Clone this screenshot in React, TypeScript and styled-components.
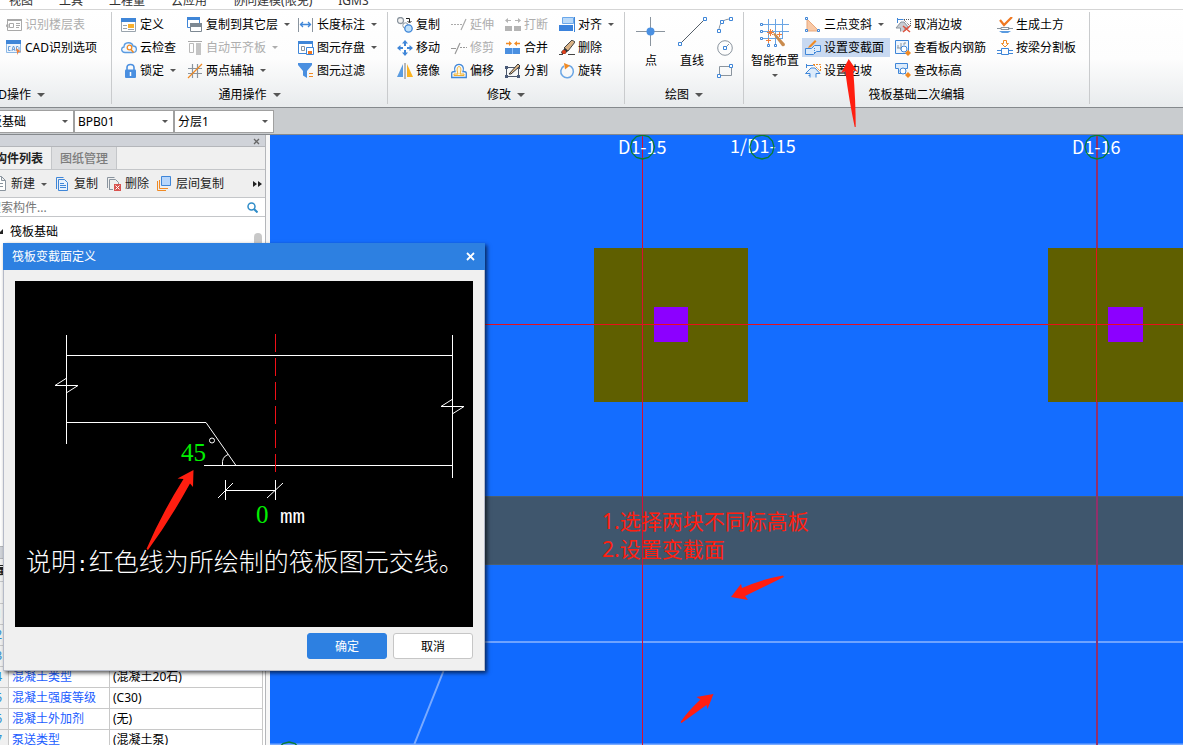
import React from "react";
import styled, { createGlobalStyle, css } from "styled-components";

const BLUE = "#3f86d8";
const GREY = "#8a949e";
const ORANGE = "#f08a24";
const RED = "#ff1e10";

const GlobalStyle = createGlobalStyle`
  *, *::before, *::after { box-sizing: border-box; }
  body {
    margin: 0;
    overflow: hidden;
    background: #f7f7f7;
    font-family: "Noto Sans", "Noto Sans CJK SC", sans-serif;
    font-size: 12px;
    line-height: 16px;
    color: #000;
  }
  button, select, input { font: inherit; color: inherit; margin: 0; }
  button { border: 0; background: none; padding: 0; white-space: nowrap; }
`;

/* The application window reaches past the top and left edges of the view. */
const Window = styled.div`
  display: flex;
  flex-direction: column;
  margin: -12px 0 0 -26px;
  height: calc(100vh + 12px);
`;

const MenuBar = styled.nav`
  display: flex;
  gap: 26px;
  height: 22px;
  padding: 5px 0 0 35px;
  background: #fff;
  border-bottom: 1px solid #d5d5d5;
`;

const MenuLink = styled.a`
  color: #333;
  text-decoration: none;
  white-space: nowrap;
`;

const Ribbon = styled.div`
  display: flex;
  flex: none;
  height: 98px;
  background: linear-gradient(#fff 0%, #fdfdfd 50%, #e8ebed 100%);
  border-bottom: 1px solid #85898d;
`;

const Group = styled.section`
  display: flex;
  flex-direction: column;
  flex: none;
  margin: 2px 0 3px;
  padding-top: 1px;
  border-right: 1px solid #c9cbcd;
`;

const GroupBody = styled.div<{ $inset?: number }>`
  display: flex;
  height: 69px;
  padding-left: ${(p) => p.$inset ?? 6}px;
`;

const GroupLabel = styled.button<{ $start?: boolean }>`
  display: flex;
  flex: 1;
  align-items: center;
  justify-content: ${(p) => (p.$start ? "flex-start" : "center")};
  gap: 6px;
  padding: 4px 0 0 ${(p) => (p.$start ? 9 : 0)}px;
`;

const ToolGrid = styled.div<{ $cols: string }>`
  display: grid;
  grid-auto-flow: column;
  grid-template-rows: repeat(3, 23px);
  grid-template-columns: ${(p) => p.$cols};
  align-items: center;
  justify-items: start;
`;

const ToolButton = styled.button<{ $active?: boolean }>`
  display: flex;
  align-items: center;
  gap: 3px;
  height: 19px;
  padding: 0 6px 0 3px;
  ${(p) => p.$active && css`background: #c8d9f1;`}
  &:disabled { color: #adadad; }
`;

const BigButton = styled.button<{ $width: number }>`
  display: flex;
  flex-direction: column;
  align-items: center;
  width: ${(p) => p.$width}px;
  padding-top: 4px;
  gap: 6px;
`;

const IconColumn = styled.div`
  display: grid;
  grid-template-rows: repeat(3, 23px);
  place-items: center;
  width: 24px;
  margin-right: 6px;
`;

const SmartButton = styled(BigButton)`
  margin-right: 2px;
  padding-top: 5px;
  gap: 5px;
`;

const Caret = styled.span<{ $large?: boolean }>`
  flex: none;
  width: 0;
  height: 0;
  margin-left: ${(p) => (p.$large ? 0 : 3)}px;
  border: solid transparent;
  border-width: ${(p) => (p.$large ? "4px 4px 0" : "3px 3px 0")};
  border-top-color: #555;
  button:disabled & { border-top-color: #adadad; }
`;

const CenteredCaret = styled(Caret)`
  margin-left: 0;
`;

const ComboBar = styled.div`
  display: flex;
  flex: none;
  height: 27px;
  padding-top: 2px;
  background: #c9cccf;
  border-bottom: 1px solid #85898d;
`;

const ComboBox = styled.label`
  position: relative;
  width: 100px;
  height: 23px;
`;

const ComboSelect = styled.select`
  appearance: none;
  display: block;
  width: 100%;
  height: 100%;
  padding: 0 0 0 3px;
  border: 1px solid #a0a0a0;
  border-radius: 0;
  background: #fff;
`;

const ComboCaret = styled(Caret)`
  position: absolute;
  right: 6px;
  top: 10px;
  pointer-events: none;
`;

const Main = styled.div`
  display: flex;
  flex: 1;
  min-height: 0;
`;

const SidePanel = styled.aside`
  display: flex;
  flex-direction: column;
  flex: none;
  width: 292px;
  margin-right: 4px;
  background: #fff;
  border-right: 1px solid #b4b6ba;
`;

const PanelTitle = styled.div`
  display: flex;
  flex: none;
  align-items: center;
  justify-content: flex-end;
  height: 12px;
  padding: 1px 5px 0 0;
  background: #d0d3d9;
  border-bottom: 1px solid #b4b6ba;
`;

const TabRow = styled.div`
  display: flex;
  flex: none;
  height: 23px;
  background: #f0f0f0;
  border-bottom: 1px solid #c4c6c9;
`;

const Tab = styled.button<{ $selected?: boolean }>`
  padding: 2px 8px 0;
  color: #7c7c7c;
  font-weight: 500;
  background: #dedfe1;
  border: 1px solid #c4c6c9;
  border-width: 0 1px 0 0;
  ${(p) =>
    p.$selected &&
    css`
      padding-left: 21px;
      color: #222;
      font-weight: 700;
      background: #f0f0f0;
    `}
`;

const PanelTools = styled.div`
  display: flex;
  flex: none;
  align-items: center;
  height: 28px;
  padding: 1px 3px 0 18px;
  background: #efefef;
  border-bottom: 1px solid #c4c6c9;
  gap: 8px;
`;

const PanelTool = styled.button`
  display: flex;
  align-items: center;
  gap: 3px;
  color: #222;
`;

const MoreTools = styled(PanelTool)`
  margin-left: auto;
`;

const SearchRow = styled.label`
  display: flex;
  flex: none;
  align-items: center;
  height: 19px;
  padding: 1px 7px 0 15px;
  border-bottom: 1px solid #c4c6c9;
`;

const SearchInput = styled.input`
  flex: 1;
  min-width: 0;
  height: 16px;
  padding: 0;
  border: 0;
  outline: 0;
  &::placeholder { color: #777; opacity: 1; }
`;

const TreeArea = styled.div`
  display: flex;
  flex: 1;
  justify-content: space-between;
  padding: 6px 3px 0 24px;
`;

const TreeItem = styled.div`
  display: flex;
  align-items: center;
  gap: 6px;
  height: 17px;
`;

const ScrollThumb = styled.div`
  width: 8px;
  height: 120px;
  margin-top: 10px;
  border-radius: 4px;
  background: #c8c8c8;
`;

const PropertyPanel = styled.section`
  flex: none;
  height: 199px;
  overflow: hidden;
  border-top: 1px solid #b4b6ba;
`;

const PropertyTable = styled.table`
  width: 289px;
  table-layout: fixed;
  border-collapse: collapse;
  td, th {
    height: 21px;
    padding: 0 3px;
    border: 1px solid #c8c8c8;
    border-top: 0;
    text-align: left;
    font-weight: 400;
  }
`;

const IndexCell = styled.th`
  width: 34px;
  background: #f0f0f0;
  color: #2a8fd0;
  && { text-align: right; padding-right: 6px; }
`;

const NameCell = styled.td`
  width: 101px;
  color: #1a5cff;
`;

const Viewport = styled.main`
  flex: 1;
  min-width: 0;
  background: #146dff;
`;

const ModelDrawing = styled.svg`
  display: block;
  width: 100%;
  height: 100%;
`;

const Dialog = styled.div`
  position: absolute;
  left: 3px;
  top: 243px;
  width: 482px;
  background: #f0f0f0;
  border: 1px solid #b5bac8;
  border-top: 0;
  box-shadow: 2px 2px 4px rgba(0, 0, 0, 0.65);
`;

const DialogTitle = styled.header`
  display: flex;
  align-items: center;
  justify-content: space-between;
  height: 27px;
  margin: 0 -1px;
  padding: 0 10px 0 9px;
  background: #2d80e1;
  color: #fff;
`;

const DialogBody = styled.div`
  padding: 11px;
`;

const SectionDrawing = styled.svg`
  display: block;
  width: 100%;
  background: #000;
  font-family: "Liberation Serif", "Noto Sans CJK SC", serif;
  font-size: 25px;
`;

const DialogActions = styled.footer`
  display: flex;
  justify-content: flex-end;
  gap: 6px;
  padding-top: 6px;
`;

const ActionButton = styled.button<{ $primary?: boolean }>`
  width: 80px;
  height: 26px;
  padding-top: 1px;
  border-radius: 3px;
  border: 1px solid ${(p) => (p.$primary ? "#2d80e1" : "#c6c6c6")};
  background: ${(p) => (p.$primary ? "#2d80e1" : "#fff")};
  color: ${(p) => (p.$primary ? "#fff" : "#000")};
`;

const Pointer = styled.svg`
  position: absolute;
  left: 840px;
  top: 58px;
  pointer-events: none;
`;

const Glyph = styled.svg`
  flex: none;
  display: block;
  fill: none;
`;

const icons: Record<string, React.ReactNode> = {
  floors: (
    <g stroke="#a9a9a9">
      <path d="M1.500 2.500h14v11h-14z" />
      <path d="M1 3h15" strokeWidth="2" />
      <path d="M3.500 6.500h4v4h-4zM10 6.500h4M10 8.500h4M10 10.500h3" />
      <path d="M0 8.500l2-1.500v4z" fill="#a9a9a9" />
    </g>
  ),
  cad: (
    <g>
      <path d="M.500 2.500h14v10h-14z" stroke="#8cb8e6" fill="#eef5fd" />
      <path d="M0 0h15v4H0z" fill={BLUE} />
      <path d="M4.500 6.500h-2v4h2M6 11l1-4.500h1L9 11M6.500 9.500h2M10.500 6.500v4h1.500l1-1v-2l-1-1z" stroke="#6a9fd8" />
      <path d="M10 8l5 3.500-2.500.5-1 3z" fill="#f0803c" />
    </g>
  ),
  define: (
    <g>
      <path d="M.500 1.500h14v13h-14z" stroke="#9aa4ad" fill="#fff" />
      <path d="M0 1h15v4H0z" fill={BLUE} />
      <path d="M2 8.500h4M2 11.500h4M7 12.500h6" stroke="#9aa4ad" />
      <path d="M7 7h6v4H7z" fill="#f9b02c" />
    </g>
  ),
  cloud: (
    <g>
      <path d="M4 12.500C0 12.500-.500 7.500 3 7 3 1.500 11 1.500 12 6c4.500 0 4.500 6.500 0 6.500z" stroke="#5a9be0" fill="#f2f8ff" strokeWidth="1.300" />
      <circle cx="8.500" cy="7.500" r="2.300" stroke={ORANGE} strokeWidth="1.300" fill="#fff" />
      <path d="M10 9.500l2.500 3" stroke={ORANGE} strokeWidth="1.500" />
    </g>
  ),
  lock: (
    <g>
      <path d="M6 7V4.500c0-4 7-4 7 0V7" stroke="#4a8fe0" strokeWidth="1.600" />
      <rect x="4" y="6.500" width="11" height="8.500" rx="1" fill="#4a8fe0" />
      <path d="M9.500 9v4" stroke="#fff" strokeWidth="1.500" />
    </g>
  ),
  copyFloor: (
    <g>
      <path d="M.500 1.500h12v9H.500z" stroke={BLUE} fill="#fff" />
      <path d="M0 0h13v3H0z" fill={BLUE} />
      <path d="M3.500 7.500h11v7h-11z" stroke="#7d8892" fill="#fff" />
      <path d="M3 6h12v4H3z" fill="#7d8892" />
    </g>
  ),
  alignSlab: (
    <g>
      <path d="M1 1.500h14" stroke="#a9a9a9" />
      <path d="M2.500 3.500h4v9h-4z" stroke="#b9b9b9" />
      <path d="M9 3h5v12H9z" fill="#c4c4c4" />
    </g>
  ),
  twoPoint: (
    <g>
      <path d="M5.500 1v14M10.500 1v14M1 5.500h14M1 10.500h14" stroke={GREY} strokeWidth="1.200" />
      <path d="M1 15L15 1" stroke={ORANGE} strokeWidth="1.200" />
    </g>
  ),
  length: (
    <g>
      <path d="M.500 1v14M14.500 1v14" stroke={GREY} />
      <path d="M2 7.500h11M5 5L2.500 7.500 5 10M10 5l2.500 2.500L10 10" stroke={BLUE} strokeWidth="1.300" />
    </g>
  ),
  store: (
    <g>
      <path d="M.500 1.500h14v12H.500z" stroke={BLUE} fill="#fff" />
      <path d="M0 1h15v3H0z" fill={BLUE} />
      <path d="M3.500 6.500h3v4h-3z" stroke={GREY} />
      <path d="M8.500 7.500h7v7h-7z" stroke={BLUE} fill="#fff" />
      <path d="M10 11h4v3h-4z" fill="#f07820" />
    </g>
  ),
  filter: (
    <g>
      <path d="M0 0h14v2L9 8v7l-4-2.500V8L0 2z" fill="#4a8fe0" />
      <path d="M11 10.500h4M11 13.500h4" stroke={ORANGE} />
    </g>
  ),
  copy: (
    <g>
      <circle cx="3.500" cy="3.500" r="3" stroke={GREY} strokeWidth="1.300" fill="#f4f4f4" />
      <path d="M9 1.500h3.500V5M10.500 4l2 2 2-2" stroke="#222" />
      <circle cx="8.500" cy="8.500" r="2.700" stroke={GREY} fill="#fff" />
      <circle cx="11.500" cy="11.500" r="3.700" stroke={BLUE} strokeWidth="1.300" fill="#bfe0fa" />
    </g>
  ),
  move: (
    <g fill={BLUE}>
      <path d="M8 0l3 3.500H5zM8 16l3-3.500H5zM0 8l3.500-3v6zM16 8l-3.500-3v6z" />
      <path d="M8 3v3M8 10v3M3 8h3M10 8h3" stroke={BLUE} strokeWidth="2" />
    </g>
  ),
  mirror: (
    <g>
      <path d="M6 1v13H0z" fill="#5a9be0" />
      <path d="M10 1v13h6z" fill="#fbb320" />
      <path d="M8 0v16" stroke="#777" />
    </g>
  ),
  extend: <path d="M0 7.500h2M3 7.500h2M6 7.500h2M9 7.500h2M10 13l5-11" stroke="#ababab" strokeWidth="1.200" />,
  trim: <path d="M0 8.500h5M9 7.500h2M12 7.500h2M15 7.500h1M4 14l5-11" stroke="#999" strokeWidth="1.200" />,
  breakIt: (
    <g fill="#b4b4b4">
      <path d="M0 9h7v5H0zM9 9h7v5H9z" />
      <path d="M3 1v5L0 3.500zM13 1v5l3-2.500z" />
      <path d="M2 3.500h4M10 3.500h4" stroke="#b4b4b4" />
    </g>
  ),
  merge: (
    <g>
      <path d="M0 8h15v6H0z" fill="#4a8fe0" />
      <path d="M7.500 8v6" stroke="#8cc0ff" />
      <path d="M4 1v5l3-2.500zM12 1v5L9 3.500z" fill={ORANGE} />
      <path d="M1 3.500h4M11 3.500h4" stroke={ORANGE} strokeWidth="1.300" />
    </g>
  ),
  offset: (
    <g>
      <path d="M.700 14.500v-4.500c0-1 1-1.500 3.300-1.500C1-1 15-1 12 8.500c2.300 0 3.300.500 3.300 1.500v4.500z" stroke={BLUE} strokeWidth="1.300" />
      <path d="M3 12.500v-1.500h4C3.500 1 12.500 1 9 11h4v1.500z" stroke="#f0b030" fill="#fff8e0" />
    </g>
  ),
  split: (
    <g>
      <path d="M1.500 4.500h12v9h-12z" stroke="#4a5568" />
      <path d="M0 3h3v3H0zM12 3h3v3h-3zM0 12h3v3H0zM12 12h3v3h-3z" fill="#4a5a78" />
      <path d="M4 11l9-10 2 2-9 8z" fill="#e8c090" stroke="#333" />
    </g>
  ),
  align: (
    <g>
      <path d="M3.500.500h11v6h-11z" fill="#b9d9f9" stroke="#6aa7ea" />
      <path d="M0 8h14v6H0z" fill="#3a82dc" />
      <path d="M15.500 0v15" stroke={BLUE} />
    </g>
  ),
  erase: (
    <g>
      <path d="M0 14.500h4M9 14.500h7" stroke="#444" />
      <path d="M5 8l8-8 3 2-7 9z" fill="#d9b184" stroke="#444" />
      <path d="M2 12l4-4 3 3-3 3H3z" fill="#333" />
      <circle cx="5" cy="12" r="2" fill="#e2401c" />
    </g>
  ),
  rotate: (
    <g>
      <path d="M10 2.500a6.300 6.300 0 1 1-5 .500" stroke="#6aa5e4" strokeWidth="1.500" />
      <path d="M5 0l6 2.500-5 4z" fill={ORANGE} />
    </g>
  ),
  arc: (
    <g>
      <path d="M2 14C2 6 6 2 14 2" stroke={GREY} />
      <path d="M.500 12.500h3v3h-3zM3.500 3.500h3v3h-3zM12.500.500h3v3h-3z" fill="#fff" stroke={BLUE} />
    </g>
  ),
  circle: (
    <g>
      <circle cx="8" cy="8" r="7.300" stroke={GREY} />
      <path d="M8 8l4-4" stroke={GREY} />
      <path d="M6.500 6.500h3v3h-3z" fill="#fff" stroke={BLUE} />
    </g>
  ),
  rect: (
    <g>
      <path d="M2.500 3.500h12v9h-12z" stroke={GREY} />
      <path d="M.500 11.500h3v3h-3zM12.500 1.500h3v3h-3z" fill="#fff" stroke={BLUE} />
    </g>
  ),
  slope3: (
    <g>
      <path d="M2 2v12h12z" fill="#f9c9a6" stroke="#e8a87c" />
      <path d="M.500.500h2v2h-2zM.500 12.500h2v2h-2zM12.500 12.500h2v2h-2z" fill="#fff" stroke={BLUE} />
    </g>
  ),
  section: (
    <g>
      <path d="M.500 14.500v-6h6l3-3h6v6h-4l-3 3z" stroke={BLUE} fill="#dcebfb" />
      <path d="M9.500 8v5" stroke={BLUE} strokeDasharray="1 1" />
      <path d="M4 6l6-6 1.500 1.500L6 7l-3 1z" fill={ORANGE} />
    </g>
  ),
  edge: (
    <g>
      <path d="M1.500 1v4M1.500 2.500h7M5 14.500v-4H.500L6 5h4l5 5.500h-4v4M5 12.500H3.500" stroke={BLUE} fill="#dcebfb" />
      <path d="M8 1.500h7.500V9M9 2l6 6" stroke={ORANGE} strokeDasharray="2 1" />
    </g>
  ),
  cancelEdge: (
    <g>
      <path d="M2.500 1v5M2.500 2.500h6" stroke={BLUE} />
      <path d="M9 2.500h6.500V10M9 3l6 6" stroke="#555" strokeDasharray="1 1" />
      <path d="M5.500 14.500V11H1l5-6h3l5 6h-4v3" fill="#c9cdd2" stroke={GREY} />
      <path d="M8 9l7 6M15 9l-7 6" stroke="#e0523c" strokeWidth="1.500" />
    </g>
  ),
  viewBar: (
    <g>
      <path d="M.500.500h13v13H.500z" stroke={BLUE} fill="#eef5fd" />
      <path d="M2 8h9M6 3v7M3 5v3M9 5V3h2" stroke={GREY} />
      <circle cx="9" cy="9" r="3" stroke={BLUE} fill="#fff" />
      <path d="M13 10l3 3-3 3-3-3z" fill={ORANGE} />
    </g>
  ),
  elevation: (
    <g>
      <path d="M.500.500h12v5h-2v5h-7v-5h-3z" stroke={BLUE} fill="#dcebfb" />
      <circle cx="8" cy="8" r="3" stroke={BLUE} fill="#fff" />
      <path d="M13 9l3 3-3 3-3-3z" fill={ORANGE} />
    </g>
  ),
  earth: (
    <g>
      <path d="M3 3l4 5 8-8" stroke="#f07820" strokeWidth="2.200" />
      <path d="M0 11.500h4M11 11.500h5M4 10.500h8v2H4z" stroke={GREY} />
      <path d="M2 14h12l-3 2H5z" fill="#5a9be0" />
    </g>
  ),
  beamSplit: (
    <g>
      <path d="M6.500.500h3v3h2L8 7 4.500 3.500h2z" stroke={ORANGE} />
      <path d="M0 10.500h4M12 10.500h4M0 13.500h4M12 13.500h4M4.500 8.500h7v6h-7z" stroke={BLUE} />
    </g>
  ),
  newItem: <path d="M3.500.500h6l4 4v10h-10zM9.500.500v4h4M6 7.500h5M6 10.500h5" stroke={GREY} fill="#fff" />,
  copyItem: (
    <g stroke={BLUE}>
      <path d="M1.500 13V1.500h7" />
      <path d="M3.500 3.500h6l3 3v8h-9z" fill="#e8f2fd" />
      <path d="M5 7.500h4M5 9.500h6M5 11.500h6" />
    </g>
  ),
  removeItem: (
    <g>
      <path d="M1.500 12V1.500h7M3.500 14V3.500h6l3 3V8M3.500 13.500H7" stroke={GREY} />
      <path d="M8 8h7v7H8z" fill="#d9534f" />
      <path d="M9.500 9.500l4 4M13.500 9.500l-4 4" stroke="#fff" />
    </g>
  ),
  layerCopy: (
    <g>
      <path d="M.500 5v9.500H9M2.500 4v8.500H11" stroke={ORANGE} />
      <path d="M4.500.500h9v9h-9z" fill="#b7d6fb" stroke={BLUE} />
    </g>
  ),
};

const Icon = ({ name }: { name: string }) => (
  <Glyph width="16" height="16" viewBox="0 0 16 16" aria-hidden="true">
    {icons[name]}
  </Glyph>
);

type Tool = { icon: string; text: string; menu?: boolean; off?: boolean; active?: boolean };

const Tools = ({ cols, items }: { cols: string; items: Tool[] }) => (
  <ToolGrid $cols={cols}>
    {items.map((t) => (
      <ToolButton key={t.text} disabled={t.off} $active={t.active}>
        <Icon name={t.icon} />
        {t.text}
        {t.menu && <Caret />}
      </ToolButton>
    ))}
  </ToolGrid>
);

const commonTools: Tool[] = [
  { icon: "define", text: "定义" },
  { icon: "cloud", text: "云检查" },
  { icon: "lock", text: "锁定", menu: true },
  { icon: "copyFloor", text: "复制到其它层", menu: true },
  { icon: "alignSlab", text: "自动平齐板", menu: true, off: true },
  { icon: "twoPoint", text: "两点辅轴", menu: true },
  { icon: "length", text: "长度标注", menu: true },
  { icon: "store", text: "图元存盘", menu: true },
  { icon: "filter", text: "图元过滤" },
];

const editTools: Tool[] = [
  { icon: "copy", text: "复制" },
  { icon: "move", text: "移动" },
  { icon: "mirror", text: "镜像" },
  { icon: "extend", text: "延伸", off: true },
  { icon: "trim", text: "修剪", off: true },
  { icon: "offset", text: "偏移" },
  { icon: "breakIt", text: "打断", off: true },
  { icon: "merge", text: "合并" },
  { icon: "split", text: "分割" },
  { icon: "align", text: "对齐", menu: true },
  { icon: "erase", text: "删除" },
  { icon: "rotate", text: "旋转" },
];

const raftTools: Tool[] = [
  { icon: "slope3", text: "三点变斜", menu: true },
  { icon: "section", text: "设置变截面", active: true },
  { icon: "edge", text: "设置边坡" },
  { icon: "cancelEdge", text: "取消边坡" },
  { icon: "viewBar", text: "查看板内钢筋" },
  { icon: "elevation", text: "查改标高" },
  { icon: "earth", text: "生成土方" },
  { icon: "beamSplit", text: "按梁分割板" },
];

const combos = [
  { label: "构件类型", value: "筏板基础" },
  { label: "构件", value: "BPB01" },
  { label: "分层", value: "分层1" },
];

const properties = [
  ["", "", ""],
  ["1", "", ""],
  ["2", "", ""],
  ["3", "", ""],
  ["4", "混凝土类型", "(混凝土20石)"],
  ["5", "混凝土强度等级", "(C30)"],
  ["6", "混凝土外加剂", "(无)"],
  ["7", "泵送类型", "(混凝土泵)"],
];

const axisRing = (cx: number, cy: number) =>
  Array.from({ length: 12 }, (_, i) => {
    const a = (i * Math.PI) / 6;
    return `${(cx + 12 * Math.sin(a)).toFixed(1)},${(cy - 12 * Math.cos(a)).toFixed(1)}`;
  }).join(" ");

const Model = () => (
  <ModelDrawing role="img" aria-label="筏板基础平面图">
    <g transform="translate(-270 -135)">
      <rect x="270" y="642" width="4000" height="2000" fill="#106aff" />
      <rect x="270" y="496" width="4000" height="69" fill="#3f566d" />
      <path d="M270 496.500h4000M270 564.500h4000" stroke="#4c606f" />
      <path d="M270 642h4000" stroke="#6ea3ff" strokeWidth="2" />
      <path d="M443.500 671L414 745M270 744.500h4000" stroke="#79aaff" strokeWidth="2" fill="none" />
      <rect x="594" y="248" width="154" height="154" fill="#5f5f00" />
      <rect x="1048" y="248" width="154" height="154" fill="#5f5f00" />
      <rect x="654" y="307" width="34" height="35" fill="#8c00ff" />
      <rect x="1108" y="307" width="35" height="35" fill="#8c00ff" />
      <path d="M270 324.500h4000" stroke="#e8101c" />
      <path d="M642.500 135v2000" stroke="#d81030" />
      <path d="M1097 135v113M1097 402v2000" stroke="#92306a" strokeWidth="2" />
      <path d="M1096.500 248v154" stroke="#e8101c" />
      <g fill="#fff" fontFamily="'Noto Sans CJK SC', sans-serif" fontSize="18">
        <text x="618" y="154">D1-15</text>
        <text x="730" y="153">1/D1-15</text>
        <text x="1072" y="154">D1-16</text>
      </g>
      <g fill="none" stroke="#0a7d34" strokeWidth="1.300">
        <polygon points={axisRing(642.5, 147)} />
        <polygon points={axisRing(762, 147)} />
        <polygon points={axisRing(1097, 147)} />
        <polygon points={axisRing(289, 754)} />
      </g>
      <g fill={RED} fontSize="21">
        <text x="602" y="529">1.选择两块不同标高板</text>
        <text x="602" y="557">2.设置变截面</text>
      </g>
      <path d="M731 597l10-13 1 4q21-9 41-12.500l1 1.500-39 19 3 4z" fill={RED} />
      <path d="M713.500 694l-17 3 4 2.500q-12 11-20 22.500l1 1 25-18 1 4z" fill={RED} />
    </g>
  </ModelDrawing>
);

const Section = () => (
  <SectionDrawing viewBox="15 281 458 346" role="img" aria-label="变截面示意图">
    <g stroke="#fff" fill="none">
      <path d="M66.500 335v109M66 355.500h387M55 385.500h23M452.500 335v143M441 406.500h23M66 422.500h140M204 465.500h249" />
      <path d="M55 385.500l11-7M78 385.500l-11 7M441 406.500l11-7M464 406.500l-11 7M206 422.500l30 43M222.500 465q-1-8 5.500-10.500" />
      <path d="M225.500 480v20M275.500 480v20M225 490.500h50M218 498l15-15M267 498l16-15" />
      <circle cx="212" cy="440.500" r="2.500" />
    </g>
    <path d="M275.500 334v138" stroke="#f01018" strokeDasharray="18 6" />
    <g fill="#00f000">
      <text x="181" y="461">45</text>
      <text x="256" y="523">0</text>
    </g>
    <g fill="#fff">
      <text x="280" y="523" fontFamily="Liberation Mono" fontSize="21">mm</text>
      <text x="26" y="571" fontWeight="300">
        说明<tspan fontFamily="Liberation Mono" fontSize="21">:</tspan>红色线为所绘制的筏板图元交线。
      </text>
    </g>
    <path d="M193.500 470l-16 8.500 6 0.500q-22 35-37 70l1.500 1q22-30 42-66.500l3 3.500z" fill={RED} />
  </SectionDrawing>
);

export default function App() {
  return (
    <>
      <GlobalStyle />
      <Window>
        <MenuBar>
          {["视图", "工具", "工程量", "云应用", "协同建模(限免)", "IGMS"].map((m) => (
            <MenuLink key={m} href="#">{m}</MenuLink>
          ))}
        </MenuBar>

        <Ribbon>
          <Group>
            <GroupBody $inset={29}>
              <Tools
                cols="108px"
                items={[
                  { icon: "floors", text: "识别楼层表", off: true },
                  { icon: "cad", text: "CAD识别选项" },
                ]}
              />
            </GroupBody>
            <GroupLabel $start>CAD操作<Caret $large /></GroupLabel>
          </Group>

          <Group>
            <GroupBody>
              <Tools cols="66px 111px 92px" items={commonTools} />
            </GroupBody>
            <GroupLabel>通用操作<Caret $large /></GroupLabel>
          </Group>

          <Group>
            <GroupBody>
              <Tools cols="54px 54px 54px 68px" items={editTools} />
            </GroupBody>
            <GroupLabel>修改<Caret $large /></GroupLabel>
          </Group>

          <Group>
            <GroupBody>
              <BigButton $width={40}>
                <Glyph width="30" height="30" viewBox="0 0 30 30">
                  <path d="M14.500 0v29M0 14.500h29" stroke={GREY} />
                  <circle cx="14.500" cy="14.500" r="4" fill="#4a90e2" />
                </Glyph>
                点
              </BigButton>
              <BigButton $width={42}>
                <Glyph width="30" height="30" viewBox="0 0 30 30">
                  <path d="M3 27L27 3" stroke="#555f69" />
                  <path d="M1.500 25.500h3v3h-3zM26.500.500h3v3h-3z" fill="#fff" stroke={BLUE} />
                </Glyph>
                直线
              </BigButton>
              <IconColumn>
                <button aria-label="弧线"><Icon name="arc" /></button>
                <button aria-label="圆"><Icon name="circle" /></button>
                <button aria-label="矩形"><Icon name="rect" /></button>
              </IconColumn>
            </GroupBody>
            <GroupLabel>绘图<Caret $large /></GroupLabel>
          </Group>

          <Group>
            <GroupBody>
              <SmartButton $width={50}>
                <Glyph width="30" height="30" viewBox="0 0 30 30">
                  <path d="M8.500 1v26M15.500 1v26M22.500 1v20M2 6.500h27M2 13.500h27M2 20.500h20" stroke="#6aa5e4" />
                  <path d="M.500 5.500h2v2h-2zM.500 12.500h2v2h-2zM.500 19.500h2v2h-2zM7.500 26.500h2v2h-2zM14.500 26.500h2v2h-2z" fill="#fff" stroke={BLUE} />
                  <path d="M13 16l9 12q3 1 3-2l-10-11z" fill="#c98b4e" />
                  <path d="M10.500 11v7M7 14.500h7M8 12l5 5M13 12l-5 5M19.500 14v5M17 16.500h5M8.500 20v5M6 22.500h5" stroke="#f0803c" />
                </Glyph>
                智能布置
                <CenteredCaret />
              </SmartButton>
              <Tools cols="90px 102px 95px" items={raftTools} />
            </GroupBody>
            <GroupLabel>筏板基础二次编辑</GroupLabel>
          </Group>
        </Ribbon>

        <ComboBar>
          {combos.map((c) => (
            <ComboBox key={c.label}>
              <ComboSelect aria-label={c.label}>
                <option>{c.value}</option>
              </ComboSelect>
              <ComboCaret />
            </ComboBox>
          ))}
        </ComboBar>

        <Main>
          <SidePanel>
            <PanelTitle>
              <Glyph width="7" height="7" viewBox="0 0 7 7">
                <path d="M1 1l5 5M6 1L1 6" stroke="#666" strokeWidth="1.300" />
              </Glyph>
            </PanelTitle>
            <TabRow>
              <Tab $selected>构件列表</Tab>
              <Tab>图纸管理</Tab>
            </TabRow>
            <PanelTools>
              <PanelTool><Icon name="newItem" />新建<Caret /></PanelTool>
              <PanelTool><Icon name="copyItem" />复制</PanelTool>
              <PanelTool><Icon name="removeItem" />删除</PanelTool>
              <PanelTool><Icon name="layerCopy" />层间复制</PanelTool>
              <MoreTools aria-label="更多">
                <Glyph width="9" height="8" viewBox="0 0 9 8">
                  <path d="M0 1l4 3-4 3zM5 1l4 3-4 3z" fill="#222" />
                </Glyph>
              </MoreTools>
            </PanelTools>
            <SearchRow>
              <SearchInput aria-label="搜索构件" placeholder="搜索构件..." />
              <Glyph width="11" height="11" viewBox="0 0 11 11">
                <circle cx="4.500" cy="4.500" r="3.500" stroke="#2f8cc8" strokeWidth="1.500" />
                <path d="M7 7l3.500 3.500" stroke="#2f8cc8" strokeWidth="2" />
              </Glyph>
            </SearchRow>
            <TreeArea>
              <TreeItem>
                <Glyph width="6" height="6" viewBox="0 0 6 6">
                  <path d="M5 0v5H0z" fill="#222" />
                </Glyph>
                筏板基础
              </TreeItem>
              <ScrollThumb />
            </TreeArea>
            <PropertyPanel>
              <PanelTitle />
              <TabRow>
                <Tab $selected>属性</Tab>
              </TabRow>
              <PropertyTable>
                <tbody>
                  {properties.map(([index, name, value]) => (
                    <tr key={index}>
                      <IndexCell scope="row">{index}</IndexCell>
                      <NameCell>{name}</NameCell>
                      <td>{value}</td>
                    </tr>
                  ))}
                </tbody>
              </PropertyTable>
            </PropertyPanel>
          </SidePanel>

          <Viewport>
            <Model />
          </Viewport>
        </Main>
      </Window>

      <Dialog role="dialog" aria-label="筏板变截面定义">
        <DialogTitle>
          筏板变截面定义
          <button aria-label="关闭">
            <Glyph width="9" height="9" viewBox="0 0 9 9">
              <path d="M1 1l7 7M8 1L1 8" stroke="#fff" strokeWidth="1.800" />
            </Glyph>
          </button>
        </DialogTitle>
        <DialogBody>
          <Section />
          <DialogActions>
            <ActionButton $primary>确定</ActionButton>
            <ActionButton>取消</ActionButton>
          </DialogActions>
        </DialogBody>
      </Dialog>

      <Pointer width="20" height="70" viewBox="840 58 20 70" aria-hidden="true">
        <path d="M848.700 59l-7.500 14 4-2q4 30 9.500 56h1q0-26-2.500-57l4.500 2z" fill={RED} />
      </Pointer>
    </>
  );
}
